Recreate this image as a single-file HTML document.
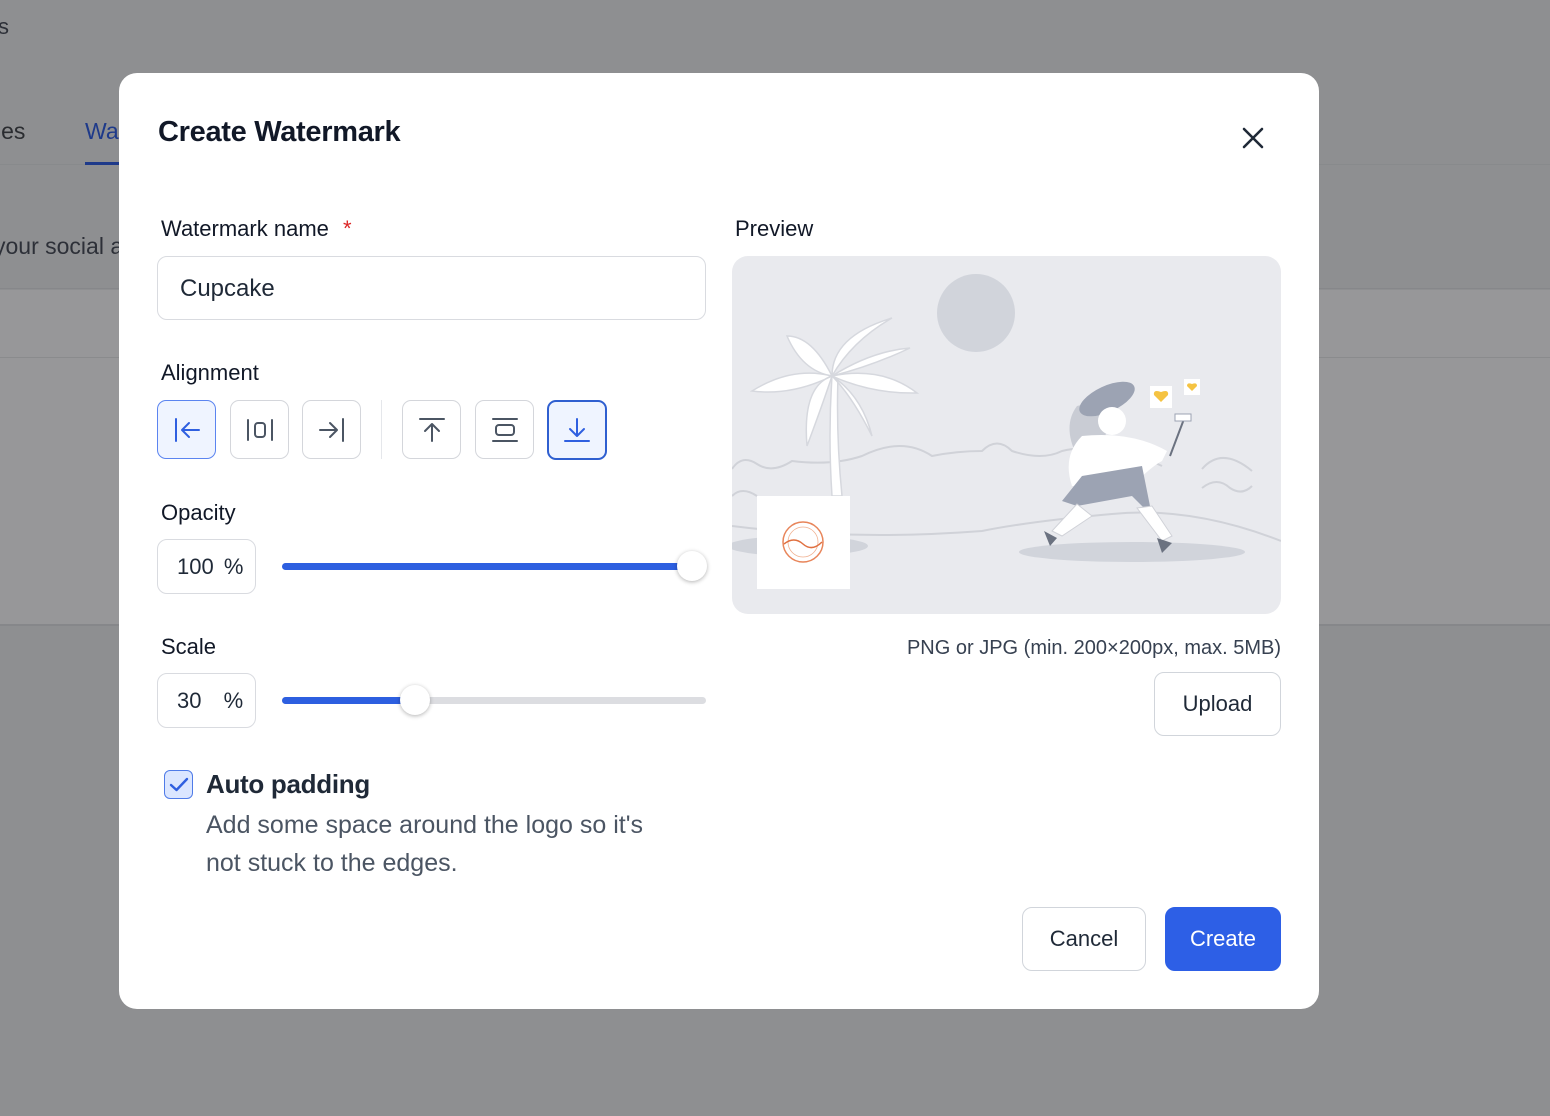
<!DOCTYPE html>
<html><head><meta charset="utf-8"><style>
*{box-sizing:border-box;margin:0;padding:0}
body{width:1550px;height:1116px;overflow:hidden;background:#8e8f91;font-family:"Liberation Sans",sans-serif;position:relative;color:#111827}
.a{position:absolute}
.modal{left:119px;top:73px;width:1200px;height:936px;background:#fff;border-radius:18px}
.lbl{font-size:22px;color:#111827}
.box{border:1px solid #d9dbe0;border-radius:10px;background:#fff}
.ab{top:400px;width:59px;height:59px;border:1px solid #d4d6db;border-radius:9px;background:#fff;display:flex;align-items:center;justify-content:center}
.btn{border:1px solid #d1d5db;border-radius:10px;background:#fff;font-size:22px;display:flex;align-items:center;justify-content:center;color:#1f2937}
</style></head><body>
<div class="a" style="left:0;top:290px;width:1550px;height:335px;background:#979799"></div>
<div class="a" style="left:0;top:288px;width:1550px;height:1px;background:#86878a"></div>
<div class="a" style="left:0;top:357px;width:1550px;height:1px;background:#8a8b8d"></div>
<div class="a" style="left:0;top:624px;width:1550px;height:2px;background:#86878a"></div>
<div class="a" style="left:0;top:164px;width:1550px;height:1px;background:#888a8c"></div>
<div class="a" style="left:-4px;top:118px;font-size:23px;color:#2a2c30">ies</div>
<div class="a" style="left:85px;top:118px;font-size:23px;color:#1e3a8a">Wa</div>
<div class="a" style="left:85px;top:162px;width:40px;height:3px;background:#1e3a8a"></div>
<div class="a" style="left:-6px;top:233px;font-size:23px;color:#2d3038">your social a</div>
<div class="a" style="left:-2px;top:14px;font-size:22px;color:#2d3038">s</div>

<div class="a modal"></div>
<div class="a" style="left:158px;top:116px;font-size:29px;font-weight:bold;color:#111827;letter-spacing:-0.3px">Create Watermark</div>
<svg class="a" style="left:1242px;top:127px" width="22" height="22" viewBox="0 0 22 22"><path d="M2 2L20 20M20 2L2 20" stroke="#1f2937" stroke-width="2.6" stroke-linecap="round"/></svg>

<div class="a lbl" style="left:161px;top:216px">Watermark name <span style="color:#dc2626;margin-left:8px">*</span></div>
<div class="a box" style="left:157px;top:256px;width:549px;height:64px"></div>
<div class="a" style="left:180px;top:275px;font-size:24px;color:#1f2937">Cupcake</div>

<div class="a lbl" style="left:161px;top:360px">Alignment</div>
<div class="a ab" style="left:157px;background:#eff4ff;border-color:#5b84f0">
<svg width="30" height="30" viewBox="0 0 30 30" fill="none" stroke="#2f5fe0" stroke-width="2" stroke-linecap="round"><path d="M4 4V26M10 15H27M10 15L17 8M10 15L17 22"/></svg></div>
<div class="a ab" style="left:230px"><svg width="30" height="30" viewBox="0 0 30 30" fill="none" stroke="#4b5563" stroke-width="2" stroke-linecap="round"><path d="M3 5V25M27 5V25"/><rect x="10" y="8" width="10" height="14" rx="3"/></svg></div>
<div class="a ab" style="left:302px"><svg width="30" height="30" viewBox="0 0 30 30" fill="none" stroke="#4b5563" stroke-width="2" stroke-linecap="round"><path d="M26 4V26M3 15H20M20 15L13 8M20 15L13 22"/></svg></div>
<div class="a" style="left:381px;top:400px;width:1px;height:59px;background:#e5e7eb"></div>
<div class="a ab" style="left:402px"><svg width="30" height="30" viewBox="0 0 30 30" fill="none" stroke="#4b5563" stroke-width="2" stroke-linecap="round"><path d="M3 4H27M15 26V9M15 9L8 16M15 9L22 16"/></svg></div>
<div class="a ab" style="left:475px"><svg width="30" height="30" viewBox="0 0 30 30" fill="none" stroke="#4b5563" stroke-width="2" stroke-linecap="round"><path d="M3 4H27M3 26H27"/><rect x="6" y="10" width="18" height="10" rx="3"/></svg></div>
<div class="a ab" style="left:547px;width:60px;height:60px;background:#eff4ff;border:2.5px solid #2f5fd0"><svg width="30" height="30" viewBox="0 0 30 30" fill="none" stroke="#2f5fe0" stroke-width="2" stroke-linecap="round"><path d="M3 26H27M15 4V21M15 21L8 14M15 21L22 14"/></svg></div>

<div class="a lbl" style="left:161px;top:500px">Opacity</div>
<div class="a box" style="left:157px;top:539px;width:99px;height:55px"></div>
<div class="a" style="left:177px;top:554px;font-size:22px;color:#1f2937">100 <span style="margin-left:4px">%</span></div>
<div class="a" style="left:282px;top:563px;width:410px;height:7px;background:#2d5fe0;border-radius:4px"></div>
<div class="a" style="left:677px;top:551px;width:30px;height:30px;border-radius:50%;background:#fff;box-shadow:0 1px 4px rgba(0,0,0,.3)"></div>

<div class="a lbl" style="left:161px;top:634px">Scale</div>
<div class="a box" style="left:157px;top:673px;width:99px;height:55px"></div>
<div class="a" style="left:177px;top:688px;font-size:22px;color:#1f2937">30 <span style="margin-left:16px">%</span></div>
<div class="a" style="left:282px;top:697px;width:424px;height:7px;background:#dcdde1;border-radius:4px"></div>
<div class="a" style="left:282px;top:697px;width:133px;height:7px;background:#2d5fe0;border-radius:4px"></div>
<div class="a" style="left:400px;top:685px;width:30px;height:30px;border-radius:50%;background:#fff;box-shadow:0 1px 4px rgba(0,0,0,.3)"></div>

<div class="a" style="left:164px;top:770px;width:29px;height:29px;border:1.5px solid #4f7be8;border-radius:6px;background:#dbe6ff"></div>
<svg class="a" style="left:168px;top:775px" width="22" height="20" viewBox="0 0 22 20"><path d="M3 10L8.5 15L19 4" fill="none" stroke="#2f5fe0" stroke-width="2.4" stroke-linecap="round" stroke-linejoin="round"/></svg>
<div class="a" style="left:206px;top:769px;font-size:26px;font-weight:bold;color:#1f2937;letter-spacing:-0.3px">Auto padding</div>
<div class="a" style="left:206px;top:806px;font-size:25px;color:#4b5563;line-height:38px;width:470px">Add some space around the logo so it's not stuck to the edges.</div>

<div class="a lbl" style="left:735px;top:216px">Preview</div>
<div class="a" style="left:732px;top:256px;width:549px;height:358px;background:#e9eaee;border-radius:16px;overflow:hidden">
<svg width="549" height="358" viewBox="0 0 549 358">
<circle cx="244" cy="57" r="39" fill="#d1d4db"/>
<path d="M0 213Q10 198 25 208T60 205Q100 210 130 200Q170 180 200 200Q225 195 250 195Q265 180 280 195Q310 205 330 195Q350 190 370 195Q400 195 430 210M470 213Q490 190 520 215M0 240Q10 230 25 240M0 270Q120 285 250 275Q300 265 380 258Q460 250 549 285" fill="none" stroke="#d0d2d8" stroke-width="2"/>
<path d="M470 232Q485 220 498 232Q510 240 520 230" fill="none" stroke="#d0d2d8" stroke-width="2"/>
<ellipse cx="66" cy="290" rx="70" ry="10" fill="#d1d4db"/>
<ellipse cx="400" cy="296" rx="113" ry="10" fill="#d1d4db"/>
<path d="M100 120Q96 180 100 240L110 240Q104 180 106 120Z" fill="#fff" stroke="#d6d8de" stroke-width="1.5"/>
<path d="M100 120Q60 110 20 135Q60 140 100 120ZM100 120Q80 80 55 80Q70 115 100 120ZM100 120Q100 80 160 62Q120 85 100 120ZM100 120Q140 95 178 92Q140 110 100 120ZM100 120Q150 110 185 137Q140 138 100 120ZM100 120Q70 130 75 190Q90 150 100 120ZM100 120Q120 140 140 180Q130 140 100 120Z" fill="#fff" stroke="#d6d8de" stroke-width="1.5"/>
<path d="M345 150Q330 170 345 200L370 200Q380 160 365 145Z" fill="#c9ccd4"/>
<ellipse cx="375" cy="143" rx="30" ry="13" fill="#9ca3b3" transform="rotate(-25 375 143)"/>
<circle cx="380" cy="165" r="14" fill="#fff"/>
<path d="M350 180Q330 200 340 230L400 230Q420 210 430 205L435 195Q400 175 350 180Z" fill="#fff"/>
<path d="M350 220L330 245L345 250L400 240L420 260L410 210Z" fill="#9ca3b3"/>
<path d="M345 248L320 275L330 280L360 260ZM405 252L430 285L440 280L420 250Z" fill="#fff" stroke="#d0d2d8"/>
<path d="M312 275L325 282L318 290ZM425 282L440 287L430 297Z" fill="#6b7280"/>
<path d="M438 200L452 163" stroke="#6b7280" stroke-width="2"/>
<rect x="443" y="158" width="16" height="7" fill="#fff" stroke="#9ca3b3"/>
<rect x="418" y="130" width="22" height="22" fill="#fff"/>
<path d="M429 146L422 139Q421 133 429 136Q437 133 436 139Z" fill="#f5c342"/>
<rect x="452" y="123" width="16" height="16" fill="#fff"/>
<path d="M460 135L455 130Q455 126 460 128Q465 126 465 130Z" fill="#f5c342"/>
<rect x="25" y="240" width="93" height="93" fill="#fff"/>
<circle cx="71" cy="286" r="20" fill="none" stroke="#e8855a" stroke-width="1.5"/>
<circle cx="71" cy="286" r="15" fill="none" stroke="#f0b090" stroke-width="0.8"/>
<path d="M52 288Q62 280 71 288T90 286" stroke="#e07040" stroke-width="1.5" fill="none"/>
</svg></div>
<div class="a" style="left:904px;top:637px;font-size:20px;color:#374151;width:377px;text-align:right">PNG or JPG (min. 200×200px, max. 5MB)</div>
<div class="a btn" style="left:1154px;top:672px;width:127px;height:64px">Upload</div>
<div class="a btn" style="left:1022px;top:907px;width:124px;height:64px">Cancel</div>
<div class="a btn" style="left:1165px;top:907px;width:116px;height:64px;background:#2d5fe6;border-color:#2d5fe6;color:#fff">Create</div>
</body></html>
